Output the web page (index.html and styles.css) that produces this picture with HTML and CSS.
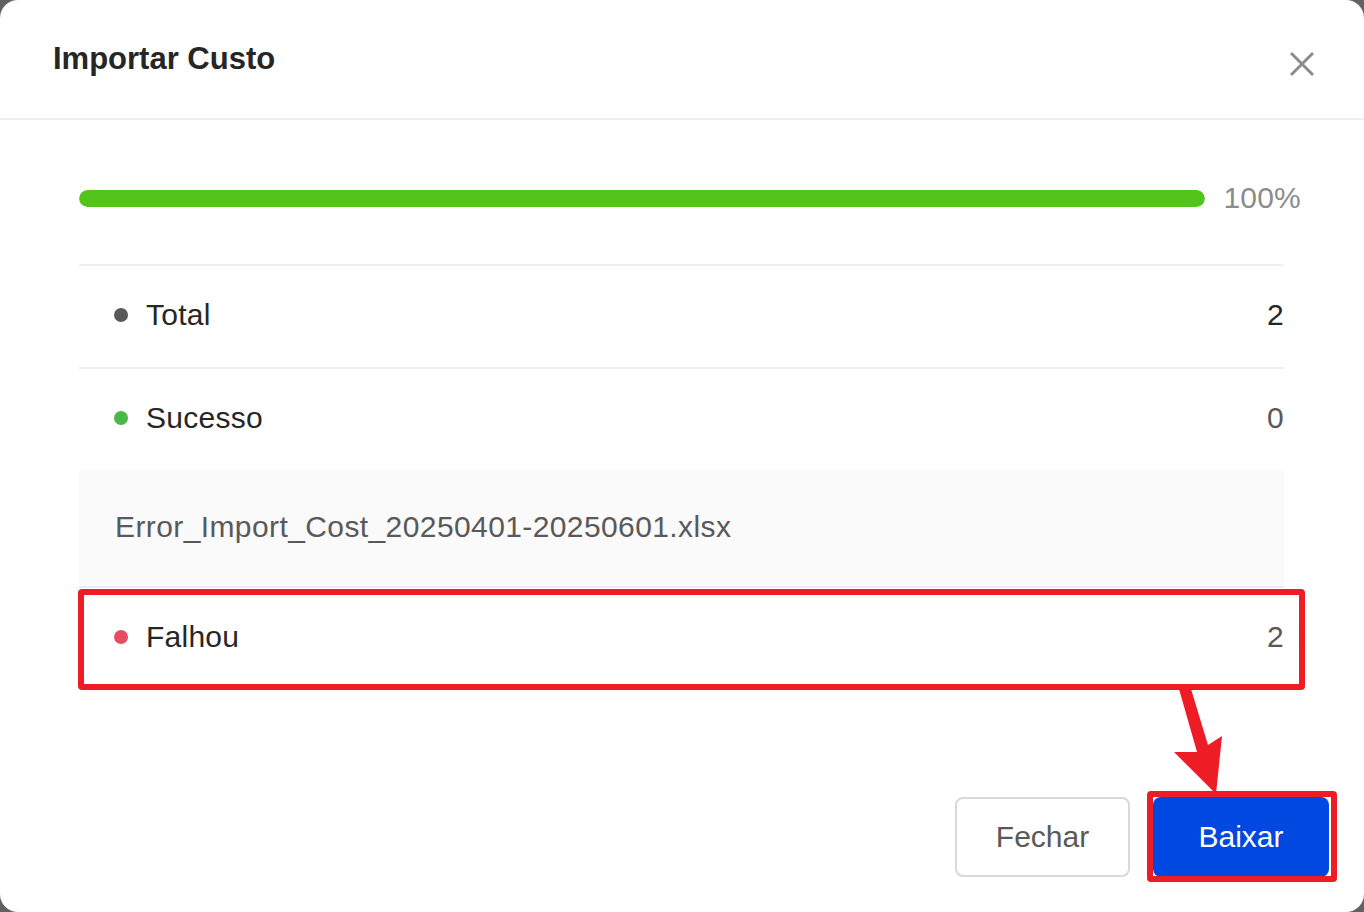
FILE: index.html
```html
<!DOCTYPE html>
<html lang="pt">
<head>
  <meta charset="UTF-8">
  <title>Importar Custo</title>
  <link rel="stylesheet" href="styles.css">
</head>
<body>
  <div class="dialog">
    <div class="header">
      <h2>Importar Custo</h2>
      <svg class="close" width="26" height="26" viewBox="0 0 26 26">
        <path d="M2 2 L24 24 M24 2 L2 24" stroke="#8c8c8c" stroke-width="3" fill="none"/>
      </svg>
    </div>

    <div class="content">
      <div class="progress">
        <div class="track"><div class="fill" style="width:100%"></div></div>
        <span class="pct">100%</span>
      </div>

      <div class="row">
        <span class="dot dot-total"></span>
        <span class="label">Total</span>
        <span class="value value-dark">2</span>
      </div>
      <div class="row">
        <span class="dot dot-ok"></span>
        <span class="label">Sucesso</span>
        <span class="value">0</span>
      </div>
      <div class="file">Error_Import_Cost_20250401-20250601.xlsx</div>
      <div class="row row-fail">
        <span class="dot dot-fail"></span>
        <span class="label">Falhou</span>
        <span class="value">2</span>
        <div class="mark mark-row"></div>
      </div>
    </div>

    <div class="footer">
      <button class="btn btn-default">Fechar</button>
      <div class="btn-wrap">
        <button class="btn btn-primary">Baixar</button>
        <div class="mark mark-btn"></div>
      </div>
    </div>

    <svg class="arrow" width="1364" height="912" viewBox="0 0 1364 912">
      <polygon points="1179,689 1191,689 1208,745 1222,736 1216,794 1174,752 1197,752" fill="#ee1c25"/>
    </svg>
  </div>
</body>
</html>
```

FILE: styles.css
```css
body {
  margin: 0;
  background: #626262;
  font-family: "Liberation Sans", Arial, sans-serif;
}
.dialog {
  position: relative;
  width: 1364px;
  height: 912px;
  background: #ffffff;
  border-radius: 18px;
  display: flex;
  flex-direction: column;
  overflow: hidden;
}
.header {
  height: 118px;
  border-bottom: 2px solid #efefef;
  display: flex;
  align-items: flex-start;
  justify-content: space-between;
  padding: 0 49px 0 53px;
}
.header h2 {
  margin: 41px 0 0;
  font-size: 31px;
  font-weight: bold;
  color: #262626;
  line-height: 36px;
}
.close {
  margin-top: 51px;
}
.content {
  padding: 69px 80px 0 79px;
}
.progress {
  display: flex;
  align-items: center;
  gap: 18px;
  margin-right: -17px;
  height: 18px;
  margin-bottom: 57px;
}
.track {
  flex: 1;
  height: 17px;
  border-radius: 9px;
  background: #f0f0f0;
  overflow: hidden;
}
.fill {
  height: 100%;
  background: #52c41a;
  border-radius: 9px;
}
.pct {
  font-size: 30px;
  color: #8c8c8c;
  letter-spacing: 0.2px;
}
.row {
  position: relative;
  height: 101px;
  box-sizing: border-box;
  height: 103px;
  padding-bottom: 3px;
  border-top: 2px solid #f0f0f0;
  display: flex;
  align-items: center;
  padding-left: 35px;
  font-size: 30px;
  color: #262626;
  letter-spacing: 0.25px;
}
.dot {
  width: 14px;
  height: 14px;
  border-radius: 50%;
  margin-right: 18px;
}
.dot-total { background: #595959; }
.dot-ok { background: #49b847; }
.dot-fail { background: #e84c65; }
.value {
  margin-left: auto;
  color: #595959;
}
.value-dark {
  color: #262626;
}
.file {
  height: 116px;
  background: #fafafa;
  display: flex;
  align-items: center;
  padding-left: 36px;
  padding-bottom: 2px;
  box-sizing: border-box;
  font-size: 30px;
  color: #595959;
  letter-spacing: 0.4px;
}
.row-fail {
  border-top-color: #ececec;
}
.mark {
  position: absolute;
  border: 6px solid #ee1c25;
  border-radius: 4px;
  box-sizing: border-box;
}
.mark-row {
  top: 1px;
  left: -1px;
  right: -21px;
  height: 101px;
}
.footer {
  margin-top: auto;
  display: flex;
  justify-content: flex-end;
  align-items: center;
  gap: 23px;
  padding: 0 35px 35px 0;
}
.btn {
  height: 80px;
  font-family: "Liberation Sans", Arial, sans-serif;
  font-size: 30px;
  border-radius: 8px;
  cursor: pointer;
}
.btn-default {
  width: 175px;
  background: #ffffff;
  border: 2px solid #d9d9d9;
  color: #595959;
}
.btn-wrap {
  position: relative;
}
.btn-primary {
  display: block;
  width: 176px;
  background: #0048e0;
  border: none;
  color: #ffffff;
}
.mark-btn {
  top: -6px;
  left: -6px;
  right: -8px;
  bottom: -5px;
}
.arrow {
  position: absolute;
  top: 0;
  left: 0;
  pointer-events: none;
}
```
